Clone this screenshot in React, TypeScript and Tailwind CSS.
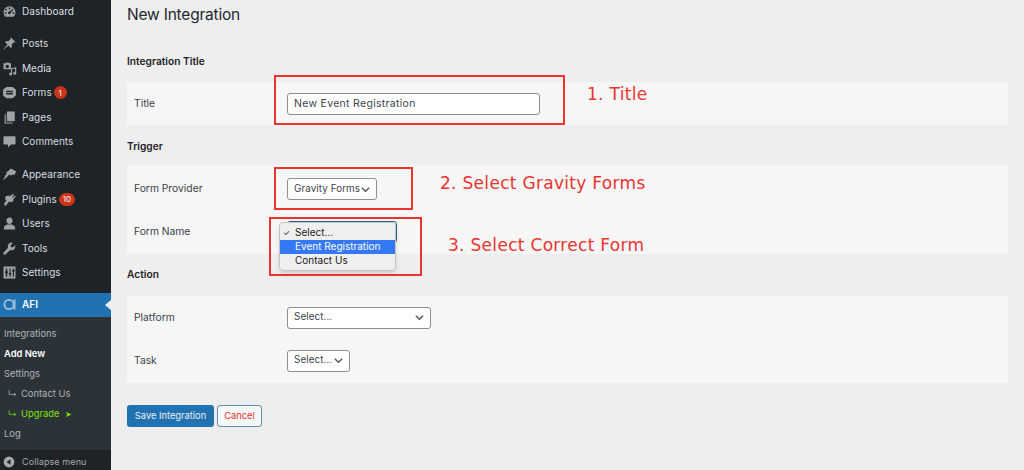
import React from "react";

const Ico = ({ children }: { children: React.ReactNode }) => (
  <svg viewBox="0 0 20 20" className="w-[15px] h-[15px] shrink-0" fill="currentColor">{children}</svg>
);

const icons: Record<string, React.ReactNode> = {
  dashboard: <path fillRule="evenodd" d="M10 3a8 8 0 0 0-8 8c0 2.500 1 4.500 2.500 6h11c1.500-1.500 2.500-3.500 2.500-6a8 8 0 0 0-8-8zM9 4.500h2v2.500H9zM5 6l1.800 1.800-1.300 1.300-1.800-1.800zM14.500 6.200l1 1-4 4.300a1.800 1.800 0 1 1-1.400-1.400zM3.500 11h2.500v2h-2.500zM14 11h2.500v2H14z" />,
  posts: <path d="M12 2l6 6-1.200.8-1-.6-3 3.300.4 3-1.400 1.400-3.200-3.200L2.500 18l-.5-.5 5.300-6.200L4 8l1.400-1.400 3 .4 3.300-3-.6-1z" />,
  media: <path fillRule="evenodd" d="M2 3h3l1-1h3l1 1h2v8H2zM7 5a2.300 2.300 0 1 0 0 4.600A2.300 2.300 0 0 0 7 5zM19 8v8.500a2 2 0 1 1-1.500-2V10l-4 1v6.500a2 2 0 1 1-1.500-2V10z" />,
  forms: <path fillRule="evenodd" d="M6 2.500h8L18.500 6v8L14 17.500H6L1.500 14V6zM5.500 7.500v2h9v-2zM5.500 10.800v2h9v-2z" />,
  pages: <path d="M6.500 2H17v13H6.500zM3.500 5.500H5V16.500h9V18H3.500z" />,
  comments: <path d="M3 3h14a1 1 0 0 1 1 1v9a1 1 0 0 1-1 1h-5l-4 4v-4H3a1 1 0 0 1-1-1V4a1 1 0 0 1 1-1z" />,
  appearance: <path d="M12 2l7 4-2.500 4.500-3-1-1 2-3-1.500-1.500 2-6.500 6 3-7 2-2.500-1-1.500 2-1z" />,
  plugins: <path d="M14.500 2.500l1.500 1-2.500 3 1 1 2.500-3 1.500 1.500-3 3-.5 3-3 1.500-2.500-1-4 5.500H3v-3l3-3.500-2-2.500 1-3.500 3.500-1 1.500 1z" />,
  users: <path d="M10 2a4 4 0 0 1 4 4.500c0 2-1.500 4-4 4s-4-2-4-4A4 4 0 0 1 10 2zM2.500 15.500c0-2.500 3.500-4 5.500-4.500 1.300.6 2.700.6 4 0 2 .5 5.500 2 5.500 4.500V18h-15z" />,
  tools: <path d="M17.500 5.500l-3 3-2.500-.5-.5-2.500 3-3a5 5 0 0 0-6.500 6.500L2 15.500a1.800 1.800 0 0 0 2.500 2.500L11 12a5 5 0 0 0 6.500-6.500z" />,
  settings: <path fillRule="evenodd" d="M2 2h16v16H2zM5 4.500v4H4v2h1v5h2v-5h1v-2H7v-4zM10 4.500v6H9v2h1v3h1.500v-3h1v-2h-1v-6zM14.500 4.500v2h-1v2h1v7H16v-7h1v-2h-1v-2z" />,
};

const Item = ({ icon, label, badge }: { icon: string; label: string; badge?: string }) => (
  <div className="flex items-center h-[24.5px] pl-[2px]">
    <span className="w-[20px] flex text-[#9ea3a8]"><Ico>{icons[icon]}</Ico></span>
    <span className="text-[10px] tracking-[0.05px] text-[#dcdde0]">{label}</span>
    {badge && (
      <span className="ml-[2px] h-[13px] min-w-[13px] px-[4px] rounded-full bg-[#c9341b] text-white text-[8px] flex items-center justify-center">{badge}</span>
    )}
  </div>
);

const Sub = ({ children, cls = "text-[#b0b5ba]" }: { children: React.ReactNode; cls?: string }) => (
  <div className={`h-[20.2px] flex items-center pl-[4px] text-[9.4px] ${cls}`}>{children}</div>
);

const Arrow = () => (
  <svg viewBox="0 0 12 10" className="w-[9px] h-[8px] ml-[4px] mr-[4px]" fill="none" stroke="currentColor" strokeWidth="1">
    <path d="M1.5 0v5.500H10M8 3.500l2.500 2-2.500 2" />
  </svg>
);

const Sel = ({ label, w, blue }: { label: string; w: string; blue?: boolean }) => (
  <div className={`${w} h-[22px] bg-white rounded-[3px] border ${blue ? "border-[#1f6298]" : "border-[#8c8f94]"} flex items-center justify-between pl-[6px] pr-[5px] text-[9.8px] tracking-[0.1px] text-[#3c434a] whitespace-nowrap`}>
    <span>{label}</span>
    <svg viewBox="0 0 12 12" className="w-[11px] h-[11px] shrink-0 text-[#50575e]" fill="none" stroke="currentColor" strokeWidth="1.5"><path d="M2 4l4 4 4-4" /></svg>
  </div>
);

const Row = ({ label, h, children }: { label: string; h: string; children: React.ReactNode }) => (
  <div className={`flex items-center ${h}`}>
    <span className="w-[160px] pl-[7px] text-[10.3px] text-[#3c434a]">{label}</span>
    {children}
  </div>
);

const Heading = ({ children, cls }: { children: React.ReactNode; cls: string }) => (
  <div className={`text-[10.2px] font-semibold text-[#1d2327] leading-[14px] ${cls}`}>{children}</div>
);

const Box = ({ cls }: { cls: string }) => <div className={`absolute border-[2.5px] border-[#e9342f] ${cls}`} />;
const Note = ({ cls, children }: { cls: string; children: React.ReactNode }) => (
  <div className={`absolute text-[17px] leading-[20px] tracking-[0.3px] text-[#e9342f] whitespace-nowrap ${cls}`} style={{ fontFamily: '"DejaVu Sans", sans-serif' }}>{children}</div>
);

export default function App() {
  return (
    <div className="relative flex w-[1024px] h-[470px] overflow-hidden bg-[#eeeeee]" style={{ fontFamily: 'Inter, "Liberation Sans", sans-serif' }}>
      <aside className="w-[111px] shrink-0 h-full bg-[#1d2327] flex flex-col">
        <div className="-mt-[1px]"><Item icon="dashboard" label="Dashboard" /></div>
        <div className="mt-[8px]">
          <Item icon="posts" label="Posts" />
          <Item icon="media" label="Media" />
          <Item icon="forms" label="Forms" badge="1" />
          <Item icon="pages" label="Pages" />
          <Item icon="comments" label="Comments" />
        </div>
        <div className="mt-[8.5px]">
          <Item icon="appearance" label="Appearance" />
          <Item icon="plugins" label="Plugins" badge="10" />
          <Item icon="users" label="Users" />
          <Item icon="tools" label="Tools" />
          <Item icon="settings" label="Settings" />
        </div>
        <div className="mt-[7.5px] h-[24px] shrink-0 bg-[#2271b1] flex items-center relative pl-[3px]">
          <svg viewBox="0 0 14 14" className="w-[13px] h-[13px] mr-[6px] text-[#9cc0dc]" fill="none" stroke="currentColor" strokeWidth="2"><circle cx="6.500" cy="7" r="5" /><path d="M12.500 1.500v11" /></svg>
          <span className="text-[10px] font-semibold text-white">AFI</span>
          <div className="absolute right-0 top-[7px] w-0 h-0 border-y-[5px] border-y-transparent border-r-[6px] border-r-[#eeeeee]" />
        </div>
        <div className="bg-[#2c3338] pt-[7px] flex-1 flex flex-col">
          <Sub>Integrations</Sub>
          <Sub cls="text-white font-semibold">Add New</Sub>
          <Sub>Settings</Sub>
          <Sub><Arrow />Contact Us</Sub>
          <Sub cls="text-[#82e012]">
            <Arrow />Upgrade
            <span className="ml-[6px] text-[8px]">➤</span>
          </Sub>
          <Sub>Log</Sub>
          <div className="mt-auto h-[20px] bg-[#1d2327] flex items-center pt-[3px] pl-[3px] text-[9px] tracking-[0.1px] text-[#a7aaad]">
            <svg viewBox="0 0 20 20" className="w-[12px] h-[12px] mr-[7px]" fill="currentColor"><path fillRule="evenodd" d="M10 1a9 9 0 1 1 0 18 9 9 0 0 1 0-18zM12.500 5.500L6 10l6.500 4.500z" /></svg>
            Collapse menu
          </div>
        </div>
      </aside>

      <main className="flex-1 pl-[16px] pr-[16px]">
        <h1 className="text-[15.5px] leading-[20px] tracking-[-0.2px] font-normal text-[#23282d] mt-[5px]">New Integration</h1>
        <Heading cls="mt-[29px]">Integration Title</Heading>
        <section className="mt-[14px] bg-[#f6f6f6]">
          <Row label="Title" h="h-[43px]">
            <div className="w-[253px] h-[22px] bg-white rounded-[3px] border border-[#8c8f94] flex items-center pl-[6px] text-[10.5px] tracking-[0.3px] text-[#3c434a]">New Event Registration</div>
          </Row>
        </section>
        <Heading cls="mt-[14px]">Trigger</Heading>
        <section className="mt-[12px] bg-[#f6f6f6] pt-[2.5px]">
          <Row label="Form Provider" h="h-[43px]"><Sel label="Gravity Forms" w="w-[90px]" /></Row>
          <Row label="Form Name" h="h-[43px]"><Sel label="Select..." w="w-[110px]" blue /></Row>
        </section>
        <Heading cls="mt-[13.5px]">Action</Heading>
        <section className="mt-[15px] bg-[#f6f6f6]">
          <Row label="Platform" h="h-[43px]"><Sel label="Select..." w="w-[144px]" /></Row>
          <Row label="Task" h="h-[43.5px]"><Sel label="Select..." w="w-[63px]" /></Row>
        </section>
        <div className="mt-[22.5px] flex gap-[3px]">
          <button className="w-[87px] h-[22px] rounded-[3px] bg-[#2271b1] text-[#e8f1f8] text-[9.3px]">Save Integration</button>
          <button className="w-[45px] h-[22px] rounded-[3px] bg-[#f6f7f7] border border-[#5f8fb5] text-[#e5322d] text-[9.3px]">Cancel</button>
        </div>
      </main>

      {/* native select popup */}
      <div className="absolute left-[279px] top-[222px] w-[117px] h-[49px] rounded-[4px] bg-[#efefef] border border-[#c4c4c4] shadow-md pt-[2px] text-[10px] text-[#222]">
        <div className="h-[15px] flex items-center"><span className="w-[15px] pl-[3px] text-[8px]">✓</span>Select...</div>
        <div className="h-[13.5px] flex items-center bg-[#3478f6] text-white pl-[15px]">Event Registration</div>
        <div className="h-[14px] flex items-center pl-[15px]">Contact Us</div>
      </div>

      <Box cls="left-[274px] top-[75px] w-[291px] h-[50px]" />
      <Box cls="left-[274px] top-[167px] w-[139px] h-[43px]" />
      <Box cls="left-[269px] top-[217px] w-[153px] h-[59px]" />
      <Note cls="left-[587px] top-[84px]">1. Title</Note>
      <Note cls="left-[440px] top-[173px]">2. Select Gravity Forms</Note>
      <Note cls="left-[448px] top-[235px]">3. Select Correct Form</Note>
    </div>
  );
}
